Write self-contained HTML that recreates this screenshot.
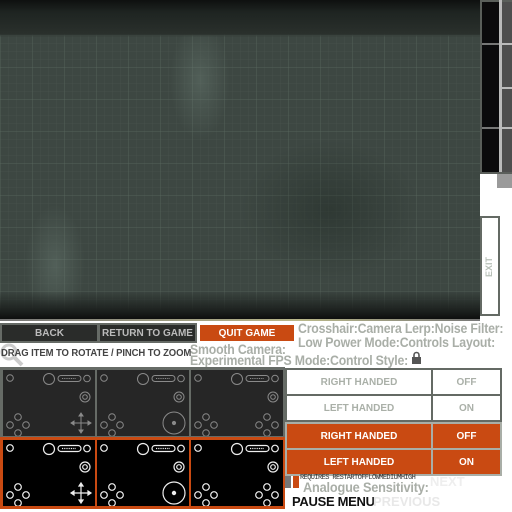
<!DOCTYPE html>
<html><head><meta charset="utf-8"><style>
*{margin:0;padding:0;box-sizing:border-box}
body{width:512px;height:512px;overflow:hidden;background:#fff;position:relative;font-family:"Liberation Sans",sans-serif;font-weight:bold}
.a{position:absolute}
#game{left:0;top:0;width:480px;height:320px;background:
linear-gradient(to bottom,#0e100f 0,#1e2421 12px,#2a302c 34px,rgba(0,0,0,0) 37px,rgba(0,0,0,0) 290px,#1a1e1c 312px,#0c0d0c 320px),
radial-gradient(ellipse 30px 60px at 200px 80px,rgba(120,140,130,.35),transparent),
radial-gradient(ellipse 30px 60px at 55px 265px,rgba(120,140,130,.35),transparent),
radial-gradient(ellipse 90px 70px at 330px 210px,rgba(20,30,25,.35),transparent),
linear-gradient(rgba(90,105,95,.3) 1px,transparent 1px) 0 3px/32px 32px,
linear-gradient(90deg,rgba(90,105,95,.3) 1px,transparent 1px) 0 0/32px 32px,
linear-gradient(rgba(90,105,95,.12) 1px,transparent 1px) 0 3px/8px 8px,
linear-gradient(90deg,rgba(90,105,95,.12) 1px,transparent 1px) 0 0/8px 8px,
#3d4742}
.btn{top:323px;height:20px;color:#bbb;font-size:10px;text-align:center;line-height:17px;background:#2a2c2a;border:2px solid #666b66}
.lbl{color:#a9aea7;font-size:13.5px;line-height:13px;white-space:nowrap;letter-spacing:-.2px;transform:scaleX(.91);transform-origin:0 0}
.cell{position:absolute;width:92px;height:66px}
table{position:absolute;border-collapse:collapse}
td{border:2px solid #646a64;text-align:center;font-size:10px;height:26px}
</style></head><body>
<div id="game" class="a"></div>
<div class="a" style="left:480px;top:0;width:32px;height:174px;background:#5a5e5a"></div>
<div class="a" style="left:482px;top:2px;width:17px;height:170px;background:#0b0a0c"></div>
<div class="a" style="left:482px;top:43px;width:17px;height:2px;background:#777"></div>
<div class="a" style="left:482px;top:127px;width:17px;height:2px;background:#777"></div>
<div class="a" style="left:499px;top:0;width:3px;height:172px;background:#bbb"></div>
<div class="a" style="left:502px;top:2px;width:10px;height:170px;background:#4e4e4e"></div>
<div class="a" style="left:502px;top:43px;width:10px;height:2px;background:#bbb"></div>
<div class="a" style="left:502px;top:87px;width:10px;height:2px;background:#bbb"></div>
<div class="a" style="left:502px;top:127px;width:10px;height:2px;background:#bbb"></div>
<div class="a" style="left:497px;top:174px;width:15px;height:14px;background:#9a9a9a"></div>
<div class="a" style="left:480px;top:216px;width:20px;height:100px;border:2px solid #646a64;background:#fff"></div>
<div class="a" style="left:474px;top:262px;width:30px;font-size:9px;color:#b8c0b8;transform:rotate(-90deg);text-align:center">EXIT</div>
<div class="a btn" style="left:0;width:99px">BACK</div>
<div class="a btn" style="left:98px;width:99px">RETURN TO GAME</div>
<div class="a btn" style="left:198px;width:98px;background:#c94a12;border-color:#fff;color:#fff">QUIT GAME</div>
<div class="a" style="left:0;top:319px;width:480px;height:2px;background:linear-gradient(90deg,#777 0,#bab88a 300px,#777 480px)"></div>
<div class="a lbl" style="left:298px;top:322px">Crosshair:Camera Lerp:Noise Filter:</div>
<div class="a lbl" style="left:298px;top:336px">Low Power Mode:Controls Layout:</div>
<div class="a lbl" style="left:190px;top:343px">Smooth Camera:</div>
<div class="a lbl" style="left:190px;top:354px">Experimental FPS Mode:Control Style:</div>
<svg class="a" style="left:411px;top:351px" width="11" height="14"><path d="M3 6V4a2.5 2.5 0 0 1 5 0v2" stroke="#555" stroke-width="1.6" fill="none"/><rect x="1" y="6" width="9" height="7" fill="#555"/></svg>
<svg class="a" style="left:0;top:343px" width="30" height="25"><circle cx="9" cy="9" r="7" stroke="#ccc" stroke-width="3" fill="none"/><path d="M14 14l8 8" stroke="#ccc" stroke-width="4"/></svg>
<div class="a" style="left:1px;top:348px;font-size:10px;color:#444;letter-spacing:-.1px;white-space:nowrap;transform:scaleX(.95);transform-origin:0 0">DRAG ITEM TO ROTATE / PINCH TO ZOOM</div>
<svg width="0" height="0" style="position:absolute"><defs>
<g id="base" fill="none"><circle cx="7" cy="8" r="3.3"/><circle cx="46" cy="9" r="5.5"/><rect x="55" y="5.5" width="23" height="6" rx="3"/><path d="M59 8.5h14" stroke-dasharray="1 .8"/><circle cx="84" cy="8.5" r="3.3"/><circle cx="82" cy="27" r="5"/><circle cx="82" cy="27" r="2.3"/>
<circle cx="15" cy="47" r="3.3"/><circle cx="15" cy="63" r="3.3"/><circle cx="7" cy="55" r="3.3"/><circle cx="23" cy="55" r="3.3"/></g>
<g id="cross"><path d="M78 45v16M70 53h16" fill="none"/><path d="M78 43l-2 3h4zM78 63l-2-3h4zM68 53l3-2v4zM88 53l-3-2v4z"/></g>
<g id="stick"><circle cx="77" cy="53" r="11" fill="none"/><circle cx="77" cy="53" r="1.6"/></g>
<g id="dpad2" fill="none"><circle cx="76" cy="47" r="3.3"/><circle cx="76" cy="63" r="3.3"/><circle cx="68" cy="55" r="3.3"/><circle cx="84" cy="55" r="3.3"/></g>
</defs></svg>
<div class="a" style="left:0;top:367px;width:285px;height:71px;background:#666b66"></div>
<div class="a" style="left:0;top:437px;width:285px;height:72px;background:#c94a12"></div>
<svg class="a cell" style="left:3px;top:370px;background:#262626" stroke="#8a8a8a" fill="#8a8a8a" stroke-width="1"><use href="#base"/><use href="#cross"/></svg>
<svg class="a cell" style="left:97px;top:370px;background:#262626" stroke="#8a8a8a" fill="#8a8a8a"><use href="#base"/><use href="#stick"/></svg>
<svg class="a cell" style="left:191px;top:370px;background:#262626" stroke="#8a8a8a" fill="#8a8a8a"><use href="#base"/><use href="#dpad2"/></svg>
<svg class="a cell" style="left:3px;top:440px;background:#000" stroke="#eee" fill="#eee" stroke-width="1.2"><use href="#base"/><use href="#cross"/></svg>
<svg class="a cell" style="left:97px;top:440px;background:#000" stroke="#eee" fill="#eee" stroke-width="1.2"><use href="#base"/><use href="#stick"/></svg>
<svg class="a cell" style="left:191px;top:440px;background:#000" stroke="#eee" fill="#eee" stroke-width="1.2"><use href="#base"/><use href="#dpad2"/></svg>
<table style="left:285px;top:368px;width:217px;color:#aab0a8">
<tr><td style="width:146px">RIGHT HANDED</td><td>OFF</td></tr>
<tr><td>LEFT HANDED</td><td>ON</td></tr></table>
<table style="left:285px;top:422px;width:217px;color:#fff;background:#c94a12">
<tr><td style="width:146px;border-color:#a9aea7">RIGHT HANDED</td><td style="border-color:#a9aea7">OFF</td></tr>
<tr><td style="border-color:#a9aea7">LEFT HANDED</td><td style="border-color:#a9aea7">ON</td></tr></table>
<div class="a" style="left:285px;top:476px;width:6px;height:12px;background:#777"></div>
<div class="a" style="left:293px;top:476px;width:6px;height:12px;background:#c94a12"></div>
<div class="a" style="left:300px;top:474px;font-size:7px;color:#333;font-family:'Liberation Mono',monospace;letter-spacing:-.6px;font-weight:normal;white-space:nowrap">REQUIRES RESTARTOFFLOWMEDIUMHIGH</div>
<div class="a" style="left:430px;top:474px;font-size:13px;color:#eee">NEXT</div>
<div class="a lbl" style="left:303px;top:481px;font-size:14px">Analogue Sensitivity:</div>
<div class="a" style="left:292px;top:494px;font-size:13px;color:#111;letter-spacing:-.3px">PAUSE MENU</div>
<div class="a" style="left:373px;top:494px;font-size:13px;color:#e8e8e8">PREVIOUS</div>
</body></html>
